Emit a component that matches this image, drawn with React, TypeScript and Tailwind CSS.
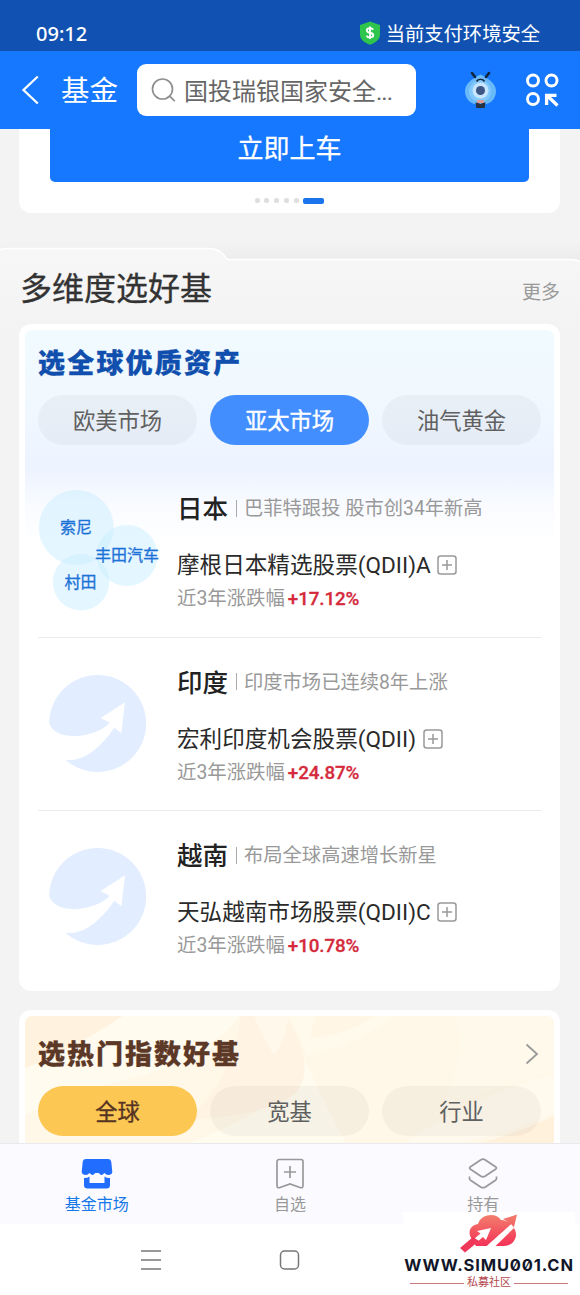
import React from "react";

const funds = [
  { region: "日本", note: "巴菲特跟投 股市创34年新高", name: "摩根日本精选股票(QDII)A", change: "+17.12%", art: "bubbles" },
  { region: "印度", note: "印度市场已连续8年上涨", name: "宏利印度机会股票(QDII)", change: "+24.87%", art: "arrow" },
  { region: "越南", note: "布局全球高速增长新星", name: "天弘越南市场股票(QDII)C", change: "+10.78%", art: "arrow" },
];

function StatusBar() {
  return (
    <div className="flex h-[51px] shrink-0 items-center justify-between bg-[#1051b1] pt-[17px] pr-[40px] pl-[36px] text-white">
      <span className="font-['Noto_Sans','Noto_Sans_CJK_SC',sans-serif] text-[20px] leading-6 font-medium">09:12</span>
      <div className="flex items-center gap-[5px]">
        <svg className="mb-[2px]" width="22" height="24" viewBox="0 0 22 24">
          <path d="M11 .5 21 4v9.5c0 5-4.5 8.2-10 10.3C5.500 21.700 1 18.500 1 13.500V4Z" fill="#2fc44c" />
          <path d="M14.200 8.700C13.500 7.700 12.400 7.200 11 7.200c-1.800 0-3.200.8-3.200 2.200 0 3.200 6.500 1.500 6.500 4.700 0 1.500-1.500 2.300-3.300 2.300-1.500 0-2.800-.5-3.500-1.700M11 5.400v12.600" fill="none" stroke="#fff" strokeWidth="1.900" />
        </svg>
        <span className="pt-[2px] text-[19.300px] leading-6">当前支付环境安全</span>
      </div>
    </div>
  );
}

function Header() {
  return (
    <div className="flex h-[78px] shrink-0 items-center bg-[#1677ff] pl-[21px] text-white">
      <svg width="19" height="30" viewBox="0 0 19 30" fill="none" stroke="#fff" strokeWidth="2.300">
        <path d="M16.800 1.500 2.500 15l14.300 13.500" />
      </svg>
      <span className="ml-[21px] w-[58px] pt-[3px] text-[28.500px] leading-10">基金</span>
      <div className="ml-[18px] flex h-[52px] w-[279px] items-center rounded-[9px] bg-white pl-[14px]">
        <svg width="25" height="25" viewBox="0 0 25 25" fill="none" stroke="#8f8f8f" strokeWidth="1.700">
          <circle cx="11.500" cy="11" r="10" />
          <path d="m18.700 18.200 5 5" />
        </svg>
        <span className="ml-[8px] pt-[3px] text-[24px] leading-9 whitespace-nowrap text-[#666]">国投瑞银国家安全<span className="tracking-[-1px]">...</span></span>
      </div>
      <svg className="ml-[48.500px]" width="31" height="38" viewBox="0 0 31 38">
        <path d="M15.500 3.500C20 6 31 11 31 20c0 9-7 14-15.500 14S0 29 0 20C0 11 11 6 15.500 3.500Z" fill="#69b9f8" />
        <path d="M15.500 6C20 10 26 13 26 20c0 6-4 11-10.500 11S4 26 4 20c0-6 6-10 11.500-14Z" fill="#8fd0ff" opacity=".65" />
        <path d="M7 2 10 6M24 2 21 6" stroke="#13263c" strokeWidth="2.600" strokeLinecap="round" />
        <path d="M11.500 10.500c1.500-3 6.500-3 8 0" fill="none" stroke="#15283c" strokeWidth="1.700" />
        <circle cx="15.500" cy="19.500" r="8" fill="#c8e5ff" />
        <circle cx="15.500" cy="19.500" r="4.500" fill="#3d5683" />
        <path d="M12 29h7v3h-7Z" fill="#df9c96" />
        <path d="M10.500 31.500c2 0 3.500.8 5 1.500 1.500-.7 3-1.500 5-1.500l-.8 5.500h-8.400Z" fill="#263142" />
      </svg>
      <svg className="ml-[30.500px]" width="33" height="34" viewBox="0 0 33 34" fill="none" stroke="#fff" strokeWidth="2.900">
        <circle cx="7" cy="7.500" r="5.500" />
        <circle cx="25.500" cy="7.500" r="5.500" />
        <circle cx="7" cy="26" r="5.500" />
        <path d="M20.600 32V22.300h9.900M21 22.500l10.500 10" strokeWidth="3.300" />
      </svg>
    </div>
  );
}

function Banner() {
  return (
    <div className="mr-[20px] ml-[19px] flex h-[84px] shrink-0 flex-col items-center rounded-b-[12px] bg-white">
      <div className="flex h-[53px] w-[479px] justify-center rounded-b-[5px] bg-[#1677ff] text-[26px] leading-[41px] text-white [-webkit-text-stroke:0.300px_#fff]">立即上车</div>
      <div className="mt-[16px] flex items-center gap-[4.700px]">
        {[0, 1, 2, 3, 4].map((i) => (
          <span key={i} className="size-[5px] rounded-[2px] bg-[#dedede]" />
        ))}
        <span className="h-[5.500px] w-[21px] rounded-[2px] bg-[#1b74eb]" />
      </div>
    </div>
  );
}

function SectionHeading() {
  return (
    <div className="relative mt-[29px] flex h-[82px] shrink-0 items-center justify-between px-[20px] pt-[12px]">
      <svg className="absolute top-0 left-0" width="580" height="82" viewBox="0 0 580 82">
        <defs>
          <linearGradient id="edge" x1="0" y1="0" x2="0" y2="1">
            <stop offset="0" stopColor="#f3f3f3" />
            <stop offset="1" stopColor="#ececec" />
          </linearGradient>
          <linearGradient id="sheet" x1="0" y1="0" x2="0" y2="1">
            <stop offset="0" stopColor="#f7f7f7" />
            <stop offset="1" stopColor="#f3f3f3" />
          </linearGradient>
        </defs>
        <path d="M0 0H580V18H0Z" fill="url(#edge)" />
        <path d="M0 8Q2 6.500 5 6.500H208C219 6.500 223 11 227 17.500H571Q577 17.500 580 20V82H0Z" fill="url(#sheet)" />
        <path d="M0 8Q2 6.500 5 6.500H208C219 6.500 223 11 227 17.500H571Q577 17.500 580 20" fill="none" stroke="#fff" strokeWidth="1.600" />
      </svg>
      <h1 className="relative text-[32px] leading-10 text-[#333] [-webkit-text-stroke:0.300px_#333]">多维度选好基</h1>
      <span className="relative mt-[7px] text-[19px] leading-7 text-[#999]">更多</span>
    </div>
  );
}

function Pills({ labels, active, activeClass }: { labels: string[]; active: number; activeClass: string }) {
  return (
    <div className="flex justify-between">
      {labels.map((label, i) => (
        <span
          key={label}
          className={`flex h-[50px] w-[159px] items-center justify-center rounded-full pt-[2px] text-[22.300px] leading-8 ${i === active ? activeClass : "bg-black/[0.035] text-[#606060]"}`}
        >
          {label}
        </span>
      ))}
    </div>
  );
}

function Bubbles() {
  return (
    <svg className="mt-[24px]" width="125" height="125" viewBox="38 488 125 125">
      <g fill="#c9edff" fillOpacity=".5">
        <circle cx="76.300" cy="527.500" r="37.500" />
        <circle cx="127" cy="555.500" r="30.500" />
        <circle cx="81" cy="582.300" r="28.200" />
      </g>
      <g fill="#1d72d8" stroke="#1d72d8" strokeWidth=".3" fontSize="16" textAnchor="middle">
        <text x="76" y="533">索尼</text>
        <text x="127" y="561">丰田汽车</text>
        <text x="80.500" y="588">村田</text>
      </g>
    </svg>
  );
}

function ArrowBall() {
  return (
    <svg className="mt-[37px] ml-[11px]" width="98" height="97" viewBox="0 0 294 291">
      <circle cx="146" cy="145.500" r="145.500" fill="#e2edff" />
      <path d="M-6 145H1C10 175 50 188 95 182C140 175 168 160 182 143L155 129L228 82L217 175L196 158C160 210 110 260 52 255L30 270L-6 230Z" fill="#fff" />
    </svg>
  );
}

function AddIcon() {
  return (
    <svg width="20" height="20" viewBox="0 0 20 20" fill="none" stroke="#999" strokeWidth="1.500">
      <rect x="1" y="1" width="18" height="18" rx="2.500" />
      <path d="M10 5v10M5 10h10" />
    </svg>
  );
}

function FundRow({ fund, last }: { fund: (typeof funds)[number]; last: boolean }) {
  return (
    <div className={`flex h-[173.500px] ${last ? "" : "border-b border-[#ebebeb]"}`}>
      <div className="w-[139px] shrink-0">{fund.art === "bubbles" ? <Bubbles /> : <ArrowBall />}</div>
      <div className="flex flex-col pt-[26px] whitespace-nowrap">
        <div className="flex h-[36px] items-center">
          <span className="pt-[2px] text-[25.500px] leading-8 font-medium text-[#222]">{fund.region}</span>
          <span className="ml-[8px] h-[17px] w-px bg-[#aaa]" />
          <span className="ml-[7px] pt-[2px] text-[19.300px] leading-8 text-[#999]">{fund.note}</span>
        </div>
        <div className="mt-[22px] flex h-[34px] items-center gap-[6.500px]">
          <span className="pt-[2px] text-[22.600px] leading-8 text-[#2a2a2a]">{fund.name}</span>
          <AddIcon />
        </div>
        <div className="mt-[2px] flex h-[28px] items-center gap-[3px] pt-[1px]">
          <span className="pt-[1px] text-[19.400px] leading-6 text-[#999]">近3年涨跌幅</span>
          <span className="pt-[1px] text-[18.800px] leading-6 font-medium tracking-[-0.100px] text-[#d42a3c] [-webkit-text-stroke:0.300px_#d42a3c]">{fund.change}</span>
        </div>
      </div>
    </div>
  );
}

function GlobalCard() {
  return (
    <div className="mr-[20px] ml-[19px] h-[666.500px] shrink-0 rounded-[12px] bg-white p-[6px]">
      <div className="h-full rounded-t-[7px] bg-[linear-gradient(180deg,#f0faff_0px,#f1f9ff_60px,#edf3ff_140px,#f9fbff_175px,#ffffff_215px)] px-[13px] pt-[14px]">
        <h2 className="h-[51px] pt-[2px] text-[27px] leading-[37px] font-black tracking-[2.200px] text-[#104fad] [-webkit-text-stroke:0.300px_#104fad]">选全球优质资产</h2>
        <Pills labels={["欧美市场", "亚太市场", "油气黄金"]} active={1} activeClass="bg-[#438eff] text-white [-webkit-text-stroke:0.400px_#fff]" />
        <div className="mt-[19px]">
          {funds.map((fund, i) => (
            <FundRow key={fund.region} fund={fund} last={i === funds.length - 1} />
          ))}
        </div>
      </div>
    </div>
  );
}

function IndexCard() {
  return (
    <div className="mr-[20px] ml-[19px] mt-[19.500px] h-[133px] shrink-0 overflow-hidden rounded-t-[12px] bg-white px-[6px] pt-[6px]">
      <div className="relative h-full overflow-hidden rounded-t-[7px] bg-[#fff7e8] px-[13px] pt-[19px]">
        <svg className="absolute top-0 left-0" width="529" height="127" viewBox="0 0 529 127">
          <path d="M0 52Q45 30 98 0H215Q180 45 100 64Q40 78 0 100Z" fill="#fffbee" />
          <path d="M0 0H98Q45 35 0 52Z" fill="#fff3e0" />
          <path d="M255 0 278 39Q300 90 321 127H165Q220 105 255 80Q293 62 266 20Z" fill="#fffbee" />
          <path d="M261 0Q293 52 270 78Q240 100 160 104Q205 72 216 0Z" fill="#fff4e4" />
          <path d="M253 0H264Q258 29 249 39Q237 20 229 0Z" fill="#fff8eb" />
          <path d="M529 58Q450 78 380 127H435Q488 116 529 97Z" fill="#fffaed" />
          <path d="M529 100Q488 119 455 127H529Z" fill="#fff1dc" />
          <path d="M370 0Q333 29 282 39L264 0Z" fill="#fffaec" />
          <path d="M350 0Q320 20 285 22L290 0Z" fill="#fff6e6" />
          <path d="M430 0H529V57Q463 70 410 100Q446 40 430 0Z" fill="#fffaed" opacity=".7" />
        </svg>
        <div className="relative flex h-[50.500px] justify-between">
          <h2 className="pt-[2px] text-[27px] leading-[37px] font-black tracking-[2px] text-[#5c3826] [-webkit-text-stroke:0.300px_#5c3826]">选热门指数好基</h2>
          <svg className="mt-[8px] mr-[2px]" width="14" height="22" viewBox="0 0 14 22" fill="none" stroke="#999" strokeWidth="1.800">
            <path d="m1.500 1.500 10.500 9.500-10.500 9.500" />
          </svg>
        </div>
        <div className="relative">
          <Pills labels={["全球", "宽基", "行业"]} active={0} activeClass="bg-[#fcc753] text-[#553322] [-webkit-text-stroke:0.300px_#553322]" />
        </div>
      </div>
    </div>
  );
}

function BottomNav() {
  return (
    <nav className="grid h-[81px] shrink-0 grid-cols-3 border-t border-[#e9e8ef] bg-[#fafaff] text-[16px] leading-5 text-[#999]">
      <div className="flex flex-col items-center pt-[14px] text-[#1677e8]">
        <svg width="32" height="32" viewBox="0 0 32 32" fill="#216dff">
          <path d="M5 1h22c2 0 3 1 3.300 3L31.300 14c0 2-2 3-4 3-1.500 0-2.500-1-4-2-2 2.500-3.500 2.500-5.500 0h-3.600c-2 2.500-3.500 2.500-5.500 0-1.500 1-2.500 2-4 2-2 0-4-1-4-3L1.700 4C2 2 3 1 5 1Z" />
          <path d="M3 20q3 .3 5.500-1.500v6.500h15v-6.500q2.500 1.800 5.500 1.500V27q0 3.500-3.500 3.500h-19Q3 30.500 3 27Z" />
        </svg>
        <span className="mt-[5px]">基金市场</span>
      </div>
      <div className="flex flex-col items-center pt-[14px]">
        <svg width="30" height="32" viewBox="0 0 30 32" fill="none" stroke="#999" strokeWidth="1.700">
          <path d="M4 1.500h22a2 2 0 0 1 2 2v24q0 3-3 2L15 26 5 29.500q-3 1-3-2v-24a2 2 0 0 1 2-2ZM15 8v12M9 14h12" />
        </svg>
        <span className="mt-[5px]">自选</span>
      </div>
      <div className="flex flex-col items-center pt-[14px]">
        <svg width="30" height="32" viewBox="0 0 30 32" fill="none" stroke="#999" strokeWidth="1.700" strokeLinejoin="round">
          <path d="M13 1.700q2-1 4 0l10.500 7q2 1.300 0 2.600l-10.500 7q-2 1-4 0l-10.500-7q-2-1.300 0-2.600Z" />
          <path d="M1.500 18.500v2q0 1 1 1.700l10.500 7q2 1 4 0l10.500-7q1-.7 1-1.700v-2" />
        </svg>
        <span className="mt-[5px]">持有</span>
      </div>
    </nav>
  );
}

function SiteMark() {
  return (
    <div className="absolute top-[1212px] left-[403px] flex h-[83px] w-[172px] flex-col items-center bg-white">
      <svg className="mt-[1px]" width="60" height="40" viewBox="0 0 60 40">
        <defs>
          <linearGradient id="cloud" x1="0" y1="0" x2="0" y2="1">
            <stop offset="0" stopColor="#f27e6c" />
            <stop offset="1" stopColor="#f43258" />
          </linearGradient>
        </defs>
        <path d="M13 26C8 20 11 12 19 11C22 1 37-1 42 7C51 7 58 16 57 23C55 31 50 33 42 33H17Z" fill="url(#cloud)" />
        <path d="M6 40 18 33H27L58 6V0H44L20 24Z" fill="#fff" opacity="0" />
        <path d="M5.500 39.500 24 24l3 3 5-12-14 3 3.500 2.500L9 31Z" fill="#fff" />
        <path d="M1 35 14 24l6 4L6 39.500Z" fill="#ef3859" />
        <path d="M27 33.500 52 11l3 4-19 18.500Z" fill="#fff" />
        <path d="M26 33 49 9l-5-3 14-4.500L55 14l-3-3-25 22Z" fill="url(#cloud)" />
      </svg>
      <span className="mt-[1px] h-[23px] font-['Inter',sans-serif] text-[16.500px] leading-[23px] font-bold tracking-[0.850px] whitespace-nowrap text-[#12162a] [font-feature-settings:'zero']">WWW.SIMU001.CN</span>
      <div className="mt-[-1px] flex items-center gap-[3px] text-[11px] leading-[14px] text-[#b4484d]">
        <span className="h-px w-[54px] bg-[#cb777a]" />
        <span>私募社区</span>
        <span className="h-px w-[54px] bg-[#cb777a]" />
      </div>
    </div>
  );
}

export default function App() {
  return (
    <div className="relative flex h-[1295px] w-[580px] flex-col overflow-hidden bg-[#f3f3f3] font-['Roboto','Noto_Sans_CJK_SC',sans-serif]">
      <StatusBar />
      <Header />
      <Banner />
      <SectionHeading />
      <GlobalCard />
      <IndexCard />
      <BottomNav />
      <div className="flex grow bg-white pt-[26px] pl-[141px]">
        <svg width="160" height="20" viewBox="0 0 160 20" fill="none" stroke="#777" strokeWidth="1.500">
          <path d="M0 1h20M0 10h20M0 19h20" />
          <rect x="139.500" y="1" width="18" height="18" rx="4" />
        </svg>
      </div>
      <SiteMark />
    </div>
  );
}
